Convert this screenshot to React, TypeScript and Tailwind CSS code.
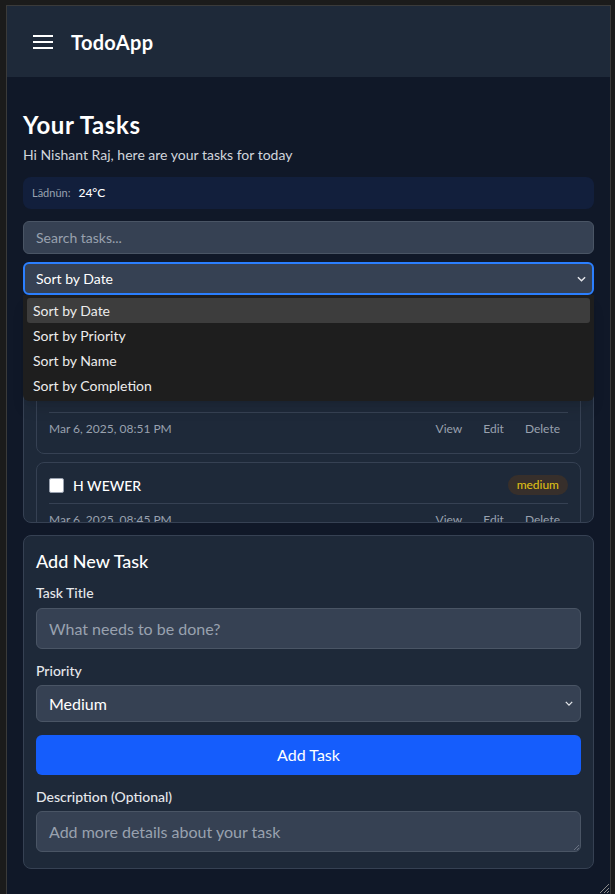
const SORT_OPTIONS = ['Sort by Date', 'Sort by Priority', 'Sort by Name', 'Sort by Completion']

function Chevron({ className }: { className: string }) {
  return (
    <svg viewBox="0 0 10 6" className={className} fill="none" stroke="currentColor" strokeWidth="1.6">
      <path d="M1 1l4 4 4-4" />
    </svg>
  )
}

// top of a card that sits under the open sort menu; only its footer shows
function HiddenCardTop() {
  return <div className="h-[76px]" />
}

function TaskCard({ title, date, covered }: { title?: string; date: string; covered?: boolean }) {
  return (
    <div className="shrink-0 rounded-lg border border-[#364153] bg-[#1e2939] px-3 pt-3 pb-3">
      {covered ? (
        <HiddenCardTop />
      ) : (
        <div className="flex h-5 items-center justify-between">
          <div className="flex items-center gap-[9px]">
            <div className="h-[15px] w-[15px] rounded-[2px] border border-gray-400 bg-white" />
            <span className="text-[14px] font-medium text-white">{title}</span>
          </div>
          <span className="rounded-full bg-[#372f2b] px-[9px] py-[1px] text-[12px] text-[#e2c415]">medium</span>
        </div>
      )}
      <div className="mt-2 flex items-center justify-between border-t border-[#364153] pt-1">
        <span className="text-[12px] leading-6 text-gray-400">{date}</span>
        <div className="flex gap-[21px] pr-[8px] text-[12px] leading-6 text-gray-400">
          <span>View</span>
          <span>Edit</span>
          <span>Delete</span>
        </div>
      </div>
    </div>
  )
}

export default function App() {
  return (
    <div className="min-h-[894px] bg-[#1b1b1b] pt-[5px] pl-[6px] pr-[4px] font-['Lato',sans-serif]">
      <div className="relative h-[889px] overflow-hidden border-t border-l border-r border-[#3a3a3a] bg-[#101828]">
        {/* header */}
        <header className="flex h-[71px] items-center gap-[18px] bg-[#1e2939] pl-[26px]">
          <svg viewBox="0 0 20 14" className="h-[14px] w-[20px]" fill="#fff">
            <rect x="0" y="0" width="20" height="2" />
            <rect x="0" y="6" width="20" height="2" />
            <rect x="0" y="12" width="20" height="2" />
          </svg>
          <span className="text-[20px] font-bold tracking-[0.3px] text-white">TodoApp</span>
        </header>

        <main className="px-4 pt-[32px]">
          <h1 className="text-[24px] leading-8 font-bold tracking-[0.6px] text-white">Your Tasks</h1>
          <p className="mt-1 text-[14px] leading-5 text-gray-300">Hi Nishant Raj, here are your tasks for today</p>

          <div className="mt-3 flex h-8 items-center gap-[8px] rounded-lg bg-[#121f3c] px-[9px]">
            <span className="text-[11px] text-gray-400">Lādnūn:</span>
            <span className="text-[12px] font-medium text-white">24°C</span>
          </div>

          <div className="mt-3 flex h-[33px] items-center rounded-md border border-[#4a5565] bg-[#364153] px-3 text-[14px] text-gray-400">
            Search tasks...
          </div>

          <div className="relative mt-2">
            <div className="flex h-[33px] items-center justify-between rounded-md border-2 border-[#2b7fff] bg-[#364153] pr-[6px] pl-3 text-[14px] text-white">
              <span className="-ml-px">Sort by Date</span>
              <Chevron className="h-[6px] w-[9px] text-gray-200" />
            </div>

            {/* open dropdown menu */}
            <div className="absolute top-[33px] right-0 left-0 z-10 rounded-b-md bg-[#1e1e1e] px-1 py-[3px] shadow-lg">
              {SORT_OPTIONS.map((option, i) => (
                <div
                  key={option}
                  className={`flex h-[25px] items-center rounded-[3px] px-[6px] text-[14px] text-[#ececec] ${i === 0 ? 'bg-[#3d3d3d]' : ''}`}
                >
                  {option}
                </div>
              ))}
            </div>
          </div>

          {/* task list */}
          <div className="mt-[7px] flex h-[221px] flex-col gap-2 overflow-hidden rounded-lg border border-[#364153] bg-[#1e2939] p-3">
            <TaskCard covered date="Mar 6, 2025, 08:51 PM" />
            <TaskCard title="H WEWER" date="Mar 6, 2025, 08:45 PM" />
          </div>

          {/* add task */}
          <div className="mt-3 rounded-lg border border-[#364153] bg-[#1e2939] px-3 pt-[11px] pb-4">
            <h2 className="text-[18px] leading-7 font-medium text-white">Add New Task</h2>

            <label className="mt-2 block text-[14px] leading-5 font-medium text-gray-200">Task Title</label>
            <div className="mt-[5px] flex h-[41px] items-center rounded-md border border-[#4a5565] bg-[#364153] px-3 text-[16px] text-gray-400">
              What needs to be done?
            </div>

            <label className="mt-3 block text-[14px] leading-5 font-medium text-gray-200">Priority</label>
            <div className="mt-1 flex h-[37px] items-center justify-between rounded-md border border-[#4a5565] bg-[#364153] pr-[7px] pl-3 text-[16px] text-white">
              <span>Medium</span>
              <Chevron className="h-[5px] w-[8px] text-gray-200" />
            </div>

            <button className="mt-[13px] h-10 w-full rounded-md bg-[#155dfc] text-[16px] text-white">Add Task</button>

            <label className="mt-3 block text-[14px] leading-5 font-medium text-gray-200">Description (Optional)</label>
            <div className="relative mt-1 flex h-[41px] items-center rounded-md border border-[#4a5565] bg-[#364153] px-3 text-[16px] text-gray-400">
              Add more details about your task
              <svg viewBox="0 0 6 6" className="absolute right-[1px] bottom-[1px] h-[6px] w-[6px]" stroke="#6a7282" strokeWidth="1">
                <path d="M6 1L1 6M6 4L4 6" />
              </svg>
            </div>
          </div>
        </main>

        {/* window resize grip */}
        <svg viewBox="0 0 10 10" className="absolute right-[1px] bottom-[1px] h-[10px] w-[10px]" stroke="#8a8a8a" strokeWidth="1">
          <path d="M10 1L1 10M10 5L5 10M10 8L8 10" />
        </svg>
      </div>
    </div>
  )
}
